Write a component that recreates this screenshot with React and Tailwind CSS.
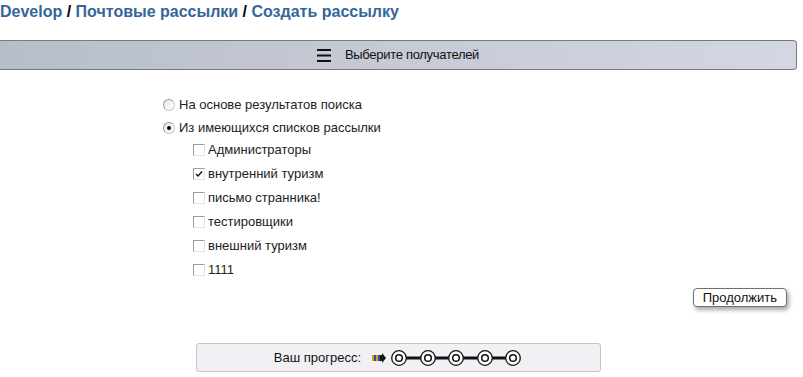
import React from 'react';

const lists = [
    { name: 'Администраторы', checked: false },
    { name: 'внутренний туризм', checked: true },
    { name: 'письмо странника!', checked: false },
    { name: 'тестировщики', checked: false },
    { name: 'внешний туризм', checked: false },
    { name: '1111', checked: false },
];

function Radio({ checked }) {
    return (
        <span className="relative inline-block w-[12px] h-[12px] rounded-full border border-[#c8c8c8] border-l-[#9a9a9a] border-t-[#9a9a9a] bg-gradient-to-br from-[#e8e8e8] to-white shrink-0">
            {checked && <span className="absolute left-[3px] top-[3px] w-[4px] h-[4px] rounded-full bg-black" />}
        </span>
    );
}

function Checkbox({ checked }) {
    return (
        <span className="relative inline-block w-[12px] h-[12px] border border-[#a0a0a0] border-r-[#e4e4e4] border-b-[#e4e4e4] bg-white shrink-0">
            {checked && (
                <svg className="absolute left-[1px] top-[1px]" width="8" height="8" viewBox="0 0 8 8">
                    <path d="M1 4 L3 6 L7 1.5" fill="none" stroke="#111" strokeWidth="1.4" />
                </svg>
            )}
        </span>
    );
}

function ProgressTrail() {
    const xs = [28, 57, 85, 114, 142];
    return (
        <svg width="152" height="18" viewBox="0 0 152 18">
            {/* arrow */}
            <rect x="1" y="6" width="2" height="6" fill="#d9a020" />
            <rect x="3" y="6" width="2" height="6" fill="#3a4a9a" />
            <rect x="5" y="6" width="2" height="6" fill="#d9a020" />
            <rect x="7" y="6" width="2" height="6" fill="#3a4a9a" />
            <path d="M9 6 H11 V4 L15 9 L11 14 V12 H9 Z" fill="#111" />
            {xs.slice(0, -1).map((x, i) => (
                <rect key={i} x={x + 7} y="7.5" width={xs[i + 1] - x - 14} height="3" fill="#111" />
            ))}
            {xs.map((x) => (
                <g key={x}>
                    <circle cx={x} cy="9" r="7.3" fill="white" stroke="#111" strokeWidth="1.3" />
                    <circle cx={x} cy="9" r="3.3" fill="white" stroke="#111" strokeWidth="1.5" />
                </g>
            ))}
        </svg>
    );
}

export default function App() {
    return (
        <div className="w-[803px] h-[377px] bg-white overflow-hidden font-['Liberation_Sans',Arial,sans-serif] text-[#111]">
            {/* breadcrumb */}
            <div className="pt-[2px] text-[16px] font-bold leading-[20px] text-[#35669a]">
                Develop <span className="text-black">/</span> Почтовые рассылки <span className="text-black">/</span> Создать рассылку
            </div>

            {/* section header */}
            <div className="mt-[18px] mr-[6px] h-[30px] flex items-center justify-center gap-[14px] border border-[#7a7a7a] border-l-0 rounded-r-[4px] bg-gradient-to-r from-[#b8bec9] to-[#d3d7e1]">
                <svg width="14" height="13" viewBox="0 0 14 13">
                    <rect x="0" y="0" width="14" height="2" fill="#111" />
                    <rect x="0" y="5.5" width="14" height="2" fill="#111" />
                    <rect x="0" y="11" width="14" height="2" fill="#111" />
                </svg>
                <span className="text-[13px] tracking-[-0.3px]">Выберите получателей</span>
            </div>

            {/* recipients */}
            <div className="pl-[163px] pt-[23px] text-[13px] leading-[16px] text-[#222]">
                <label className="flex items-center gap-[4px] h-[23px]">
                    <Radio checked={false} />
                    <span>На основе результатов поиска</span>
                </label>
                <label className="flex items-center gap-[4px] h-[23px]">
                    <Radio checked />
                    <span>Из имеющихся списков рассылки</span>
                </label>
                <div className="pl-[30px] -mt-[1px]">
                    {lists.map((l) => (
                        <label key={l.name} className="flex items-center gap-[3px] h-[24px]">
                            <Checkbox checked={l.checked} />
                            <span>{l.name}</span>
                        </label>
                    ))}
                </div>
            </div>

            <div className="flex justify-end pr-[16px] mt-[6px]">
                <button className="h-[19px] px-[9px] text-[13px] leading-[17px] border border-[#707070] rounded-[4px] bg-white shadow-[2px_3px_4px_rgba(0,0,0,0.35)]">
                    Продолжить
                </button>
            </div>

            <div className="mt-[36px] ml-[196px] w-[405px] h-[29px] flex items-center justify-center gap-[10px] border border-[#c4c4c4] rounded-[3px] bg-[#f1f1f5]">
                <span className="text-[13px]">Ваш прогресс:</span>
                <ProgressTrail />
            </div>
        </div>
    );
}
